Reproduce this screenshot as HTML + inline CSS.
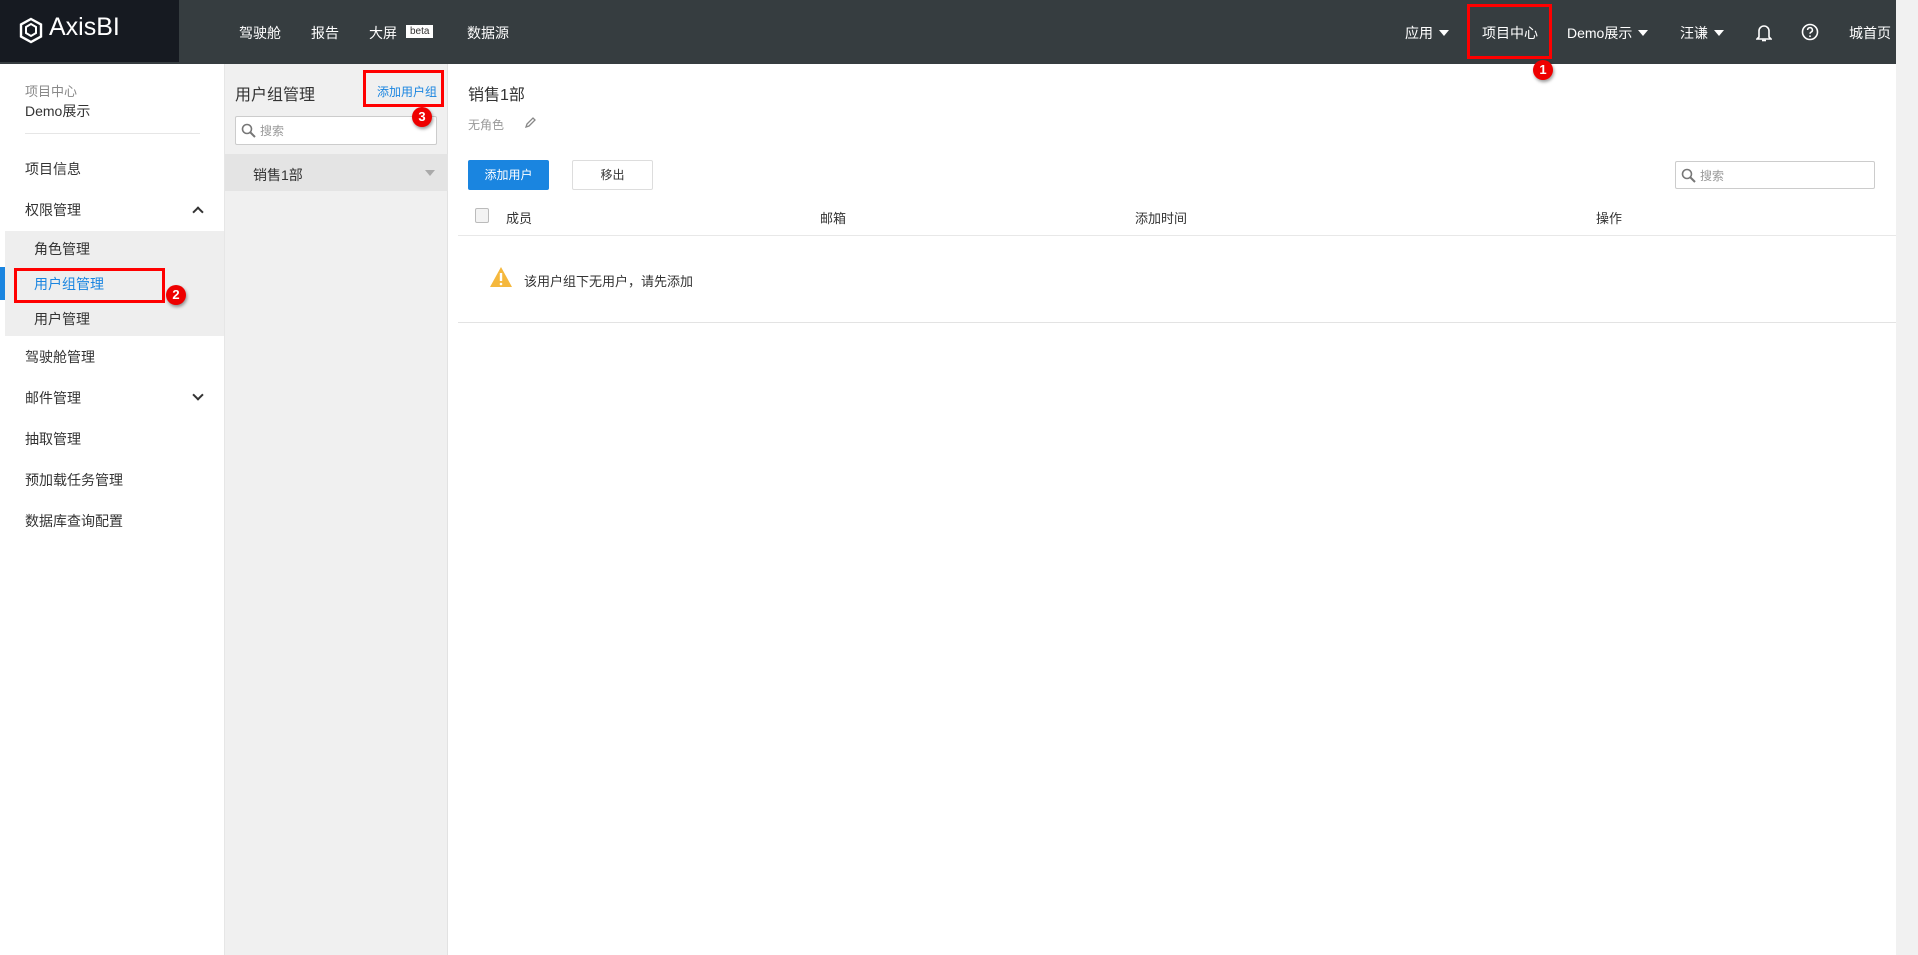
<!DOCTYPE html>
<html><head><meta charset="utf-8"><style>
*{margin:0;padding:0;box-sizing:border-box}
body{width:1918px;height:955px;overflow:hidden;background:#fff;font-family:"Liberation Sans","Noto Sans CJK SC",sans-serif;font-size:13px;color:#333;position:relative}
.a{position:absolute;white-space:nowrap}
.hdr{position:absolute;left:0;top:0;width:1896px;height:64px;background:#363d40}
.logo{position:absolute;left:0;top:0;width:179px;height:62px;background:#161a21}
.nav{color:#fff;font-size:14px;top:23px}
.caret{display:inline-block;width:0;height:0;border-left:5px solid transparent;border-right:5px solid transparent;border-top:6px solid #fff;margin-left:6px;vertical-align:2px}
.red{position:absolute;border:3px solid #f00}
.badge{position:absolute;width:20px;height:20px;border-radius:50%;background:#e00;color:#fff;font-size:13px;font-weight:bold;text-align:center;line-height:20px;box-shadow:1px 2px 3px rgba(0,0,0,.4);z-index:5}
.side{position:absolute;left:0;top:64px;width:225px;height:891px;background:#fff;border-right:1px solid #e6e6e6}
.mid{position:absolute;left:225px;top:64px;width:223px;height:891px;background:#f0f0f0;border-right:1px solid #e2e2e2}
.menu{font-size:14px;color:#333;left:25px}
.sub{font-size:14px;left:34px}
.srch{position:absolute;border:1px solid #ccc;background:#fff;border-radius:2px}
.srch span{position:absolute;left:24px;top:5px;color:#999;font-size:12px}
.chev{position:absolute;width:8px;height:8px;border-left:2px solid #333;border-top:2px solid #333}
</style></head><body>
<div class="hdr"></div>
<div class="logo"></div>
<svg class="a" style="left:19px;top:17px" width="24" height="27" viewBox="0 0 24 27"><path d="M12 2L22 7.5V19.5L12 25L2 19.5V7.5Z" fill="none" stroke="#fff" stroke-width="2.4"/><path d="M7 10L12 7L17 10V16L12 19L7 16Z" fill="none" stroke="#fff" stroke-width="2"/></svg>
<div class="a" style="left:49px;top:13px;color:#fff;font-size:25px">AxisBI</div>
<div class="a nav" style="left:239px">驾驶舱</div>
<div class="a nav" style="left:311px">报告</div>
<div class="a nav" style="left:369px">大屏</div>
<div class="a" style="left:406px;top:25px;background:#fff;color:#333;font-size:10px;padding:0 4px;height:13px;line-height:13px">beta</div>
<div class="a nav" style="left:467px">数据源</div>
<div class="a nav" style="left:1405px">应用<span class="caret"></span></div>
<div class="a nav" style="left:1482px">项目中心</div>
<div class="a nav" style="left:1567px">Demo展示<span class="caret"></span></div>
<div class="a nav" style="left:1680px">汪谦<span class="caret"></span></div>
<svg class="a" style="left:1756px;top:23px" width="16" height="19" viewBox="0 0 16 19"><path d="M3 14V8a5 5 0 0 1 10 0v6l2 2H1z" fill="none" stroke="#fff" stroke-width="1.6"/><path d="M6 17.5h4" stroke="#fff" stroke-width="1.6"/></svg>
<svg class="a" style="left:1801px;top:23px" width="18" height="18" viewBox="0 0 18 18"><circle cx="9" cy="9" r="7.5" fill="none" stroke="#fff" stroke-width="1.6"/><path d="M6.6 7a2.4 2.4 0 1 1 3.4 2.2c-.7.4-1 .8-1 1.6" fill="none" stroke="#fff" stroke-width="1.5"/><circle cx="9" cy="13.2" r=".9" fill="#fff"/></svg>
<div class="a nav" style="left:1849px">城首页</div>
<div class="red" style="left:1467px;top:4px;width:85px;height:55px"></div>
<div class="badge" style="left:1533px;top:60px">1</div>
<div class="a" style="left:1896px;top:0;width:22px;height:955px;background:#f1f1f1"></div>

<div class="side"></div>
<div class="a" style="left:25px;top:81px;color:#888;font-size:13px">项目中心</div>
<div class="a" style="left:25px;top:101px;font-size:14px">Demo展示</div>
<div class="a" style="left:25px;top:133px;width:175px;height:1px;background:#e6e6e6"></div>
<div class="a menu" style="top:159px">项目信息</div>
<div class="a menu" style="top:200px">权限管理</div>
<div class="chev" style="left:194px;top:208px;transform:rotate(45deg)"></div>
<div class="a" style="left:5px;top:231px;width:219px;height:105px;background:#eee"></div>
<div class="a" style="left:0;top:267px;width:5px;height:33px;background:#1a85e0"></div>
<div class="a sub" style="top:239px">角色管理</div>
<div class="a sub" style="top:274px;color:#1a85e0">用户组管理</div>
<div class="a sub" style="top:309px">用户管理</div>
<div class="red" style="left:14px;top:268px;width:151px;height:35px"></div>
<div class="badge" style="left:166px;top:285px">2</div>
<div class="a menu" style="top:347px">驾驶舱管理</div>
<div class="a menu" style="top:388px">邮件管理</div>
<div class="chev" style="left:194px;top:391px;transform:rotate(225deg)"></div>
<div class="a menu" style="top:429px">抽取管理</div>
<div class="a menu" style="top:470px">预加载任务管理</div>
<div class="a menu" style="top:511px">数据库查询配置</div>

<div class="mid"></div>
<div class="a" style="left:235px;top:81px;font-size:16px">用户组管理</div>
<div class="a" style="left:377px;top:83px;color:#1a85e0;font-size:12px">添加用户组</div>
<div class="red" style="left:363px;top:70px;width:81px;height:37px"></div>
<div class="srch" style="left:235px;top:116px;width:202px;height:29px"><svg class="a" style="left:5px;top:6px" width="15" height="15" viewBox="0 0 15 15"><circle cx="6" cy="6" r="4.5" fill="none" stroke="#777" stroke-width="1.6"/><path d="M9.5 9.5L14 14" stroke="#777" stroke-width="2"/></svg><span>搜索</span></div>
<div class="badge" style="left:412px;top:107px">3</div>
<div class="a" style="left:225px;top:154px;width:223px;height:37px;background:#e4e4e4"></div>
<div class="a" style="left:253px;top:165px;font-size:14px">销售1部</div>
<div class="a" style="left:425px;top:170px;width:0;height:0;border-left:5px solid transparent;border-right:5px solid transparent;border-top:6px solid #aaa"></div>

<div class="a" style="left:468px;top:81px;font-size:16px">销售1部</div>
<div class="a" style="left:468px;top:116px;color:#999;font-size:12px">无角色</div>
<svg class="a" style="left:525px;top:117px" width="11" height="11" viewBox="0 0 11 11"><path d="M1 10L2 7L8 1L10 3L4 9Z" fill="none" stroke="#888" stroke-width="1.3"/></svg>
<div class="a" style="left:468px;top:160px;width:81px;height:30px;background:#1a85e0;border-radius:2px;color:#fff;font-size:12px;text-align:center;line-height:30px">添加用户</div>
<div class="a" style="left:572px;top:160px;width:81px;height:30px;border:1px solid #ddd;border-radius:2px;font-size:12px;text-align:center;line-height:28px">移出</div>
<div class="srch" style="left:1675px;top:161px;width:200px;height:28px"><svg class="a" style="left:5px;top:6px" width="15" height="15" viewBox="0 0 15 15"><circle cx="6" cy="6" r="4.5" fill="none" stroke="#777" stroke-width="1.6"/><path d="M9.5 9.5L14 14" stroke="#777" stroke-width="2"/></svg><span>搜索</span></div>
<div class="a" style="left:475px;top:208px;width:14px;height:15px;border:1px solid #bbb;border-radius:2px;background:#f3f3f3"></div>
<div class="a" style="left:506px;top:208px">成员</div>
<div class="a" style="left:820px;top:208px">邮箱</div>
<div class="a" style="left:1135px;top:208px">添加时间</div>
<div class="a" style="left:1596px;top:208px">操作</div>
<div class="a" style="left:458px;top:235px;width:1438px;height:1px;background:#e8e8e8"></div>
<svg class="a" style="left:489px;top:266px" width="24" height="22" viewBox="0 0 24 22"><path d="M12 1L23 21H1Z" fill="#f5b83d"/><path d="M12 7V15" stroke="#fff" stroke-width="2.4"/><circle cx="12" cy="18" r="1.3" fill="#fff"/></svg>
<div class="a" style="left:524px;top:271px">该用户组下无用户，请先添加</div>
<div class="a" style="left:458px;top:322px;width:1438px;height:1px;background:#e3e3e3"></div>
</body></html>
